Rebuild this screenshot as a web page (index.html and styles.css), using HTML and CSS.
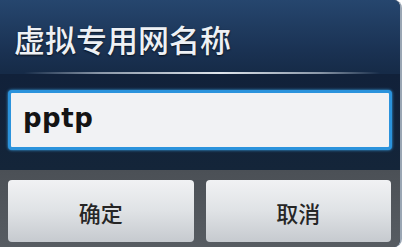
FILE: index.html
```html
<!DOCTYPE html>
<html lang="zh">
<head>
<meta charset="utf-8">
<link rel="stylesheet" href="styles.css">
</head>
<body>
<div class="dialog">
  <div class="title">虚拟专用网名称</div>
  <div class="sep"></div>
  <div class="content">
    <div class="input">pptp</div>
  </div>
  <div class="buttons">
    <div class="btn">确定</div>
    <div class="btn">取消</div>
  </div>
</div>
</body>
</html>
```
FILE: styles.css
```css
html, body {
  margin: 0;
  padding: 0;
  background: #ffffff;
}
body {
  width: 407px;
  height: 249px;
  overflow: hidden;
  font-family: "Noto Sans CJK SC", "Noto Sans", sans-serif;
}
.dialog {
  width: 400px;
  height: 247px;
  border-right: 2px solid #9aa6b4;
  border-radius: 0 8px 8px 0;
  overflow: hidden;
  display: flex;
  flex-direction: column;
  background: #13233a;
}
.title {
  height: 72px;
  box-sizing: border-box;
  padding-left: 14px;
  display: flex;
  align-items: center;
  padding-top: 4px;
  font-size: 31px;
  font-weight: 500;
  color: #eef1f5;
  text-shadow: 0 1px 2px rgba(0, 0, 0, 0.7);
  background: linear-gradient(#26466e, #1a3253 70%, #162b48);
}
.sep {
  height: 2px;
  background: linear-gradient(90deg, #162b48 6%, #8a97a8 25%, #dfe5ec 55%, #8a97a8 80%, #162b48 95%);
}
.content {
  height: 96px;
  box-sizing: border-box;
  padding: 16px 8px 0 8px;
  background: linear-gradient(#11213a, #142539);
}
.input {
  height: 60px;
  box-sizing: border-box;
  border: 3px solid #2b93dc;
  border-radius: 4px;
  box-shadow: 0 0 3px #3aa6ee;
  background: #f1f2f4;
  display: flex;
  align-items: center;
  padding-left: 12px;
  padding-bottom: 4px;
  font-family: "DejaVu Sans", sans-serif;
  font-weight: 700;
  font-size: 26px;
  letter-spacing: 0.5px;
  color: #141414;
}
.buttons {
  flex: 1;
  display: flex;
  gap: 12px;
  padding: 10px 9px 5px 8px;
  background: linear-gradient(#4b5056, #575c62);
}
.btn {
  flex: 1;
  border-radius: 4px;
  background: linear-gradient(#f1f2f4, #dfe2e5 50%, #c6cacf);
  display: flex;
  align-items: center;
  justify-content: center;
  font-size: 22px;
  font-weight: 500;
  color: #262626;
  padding-top: 2px;
}
```
